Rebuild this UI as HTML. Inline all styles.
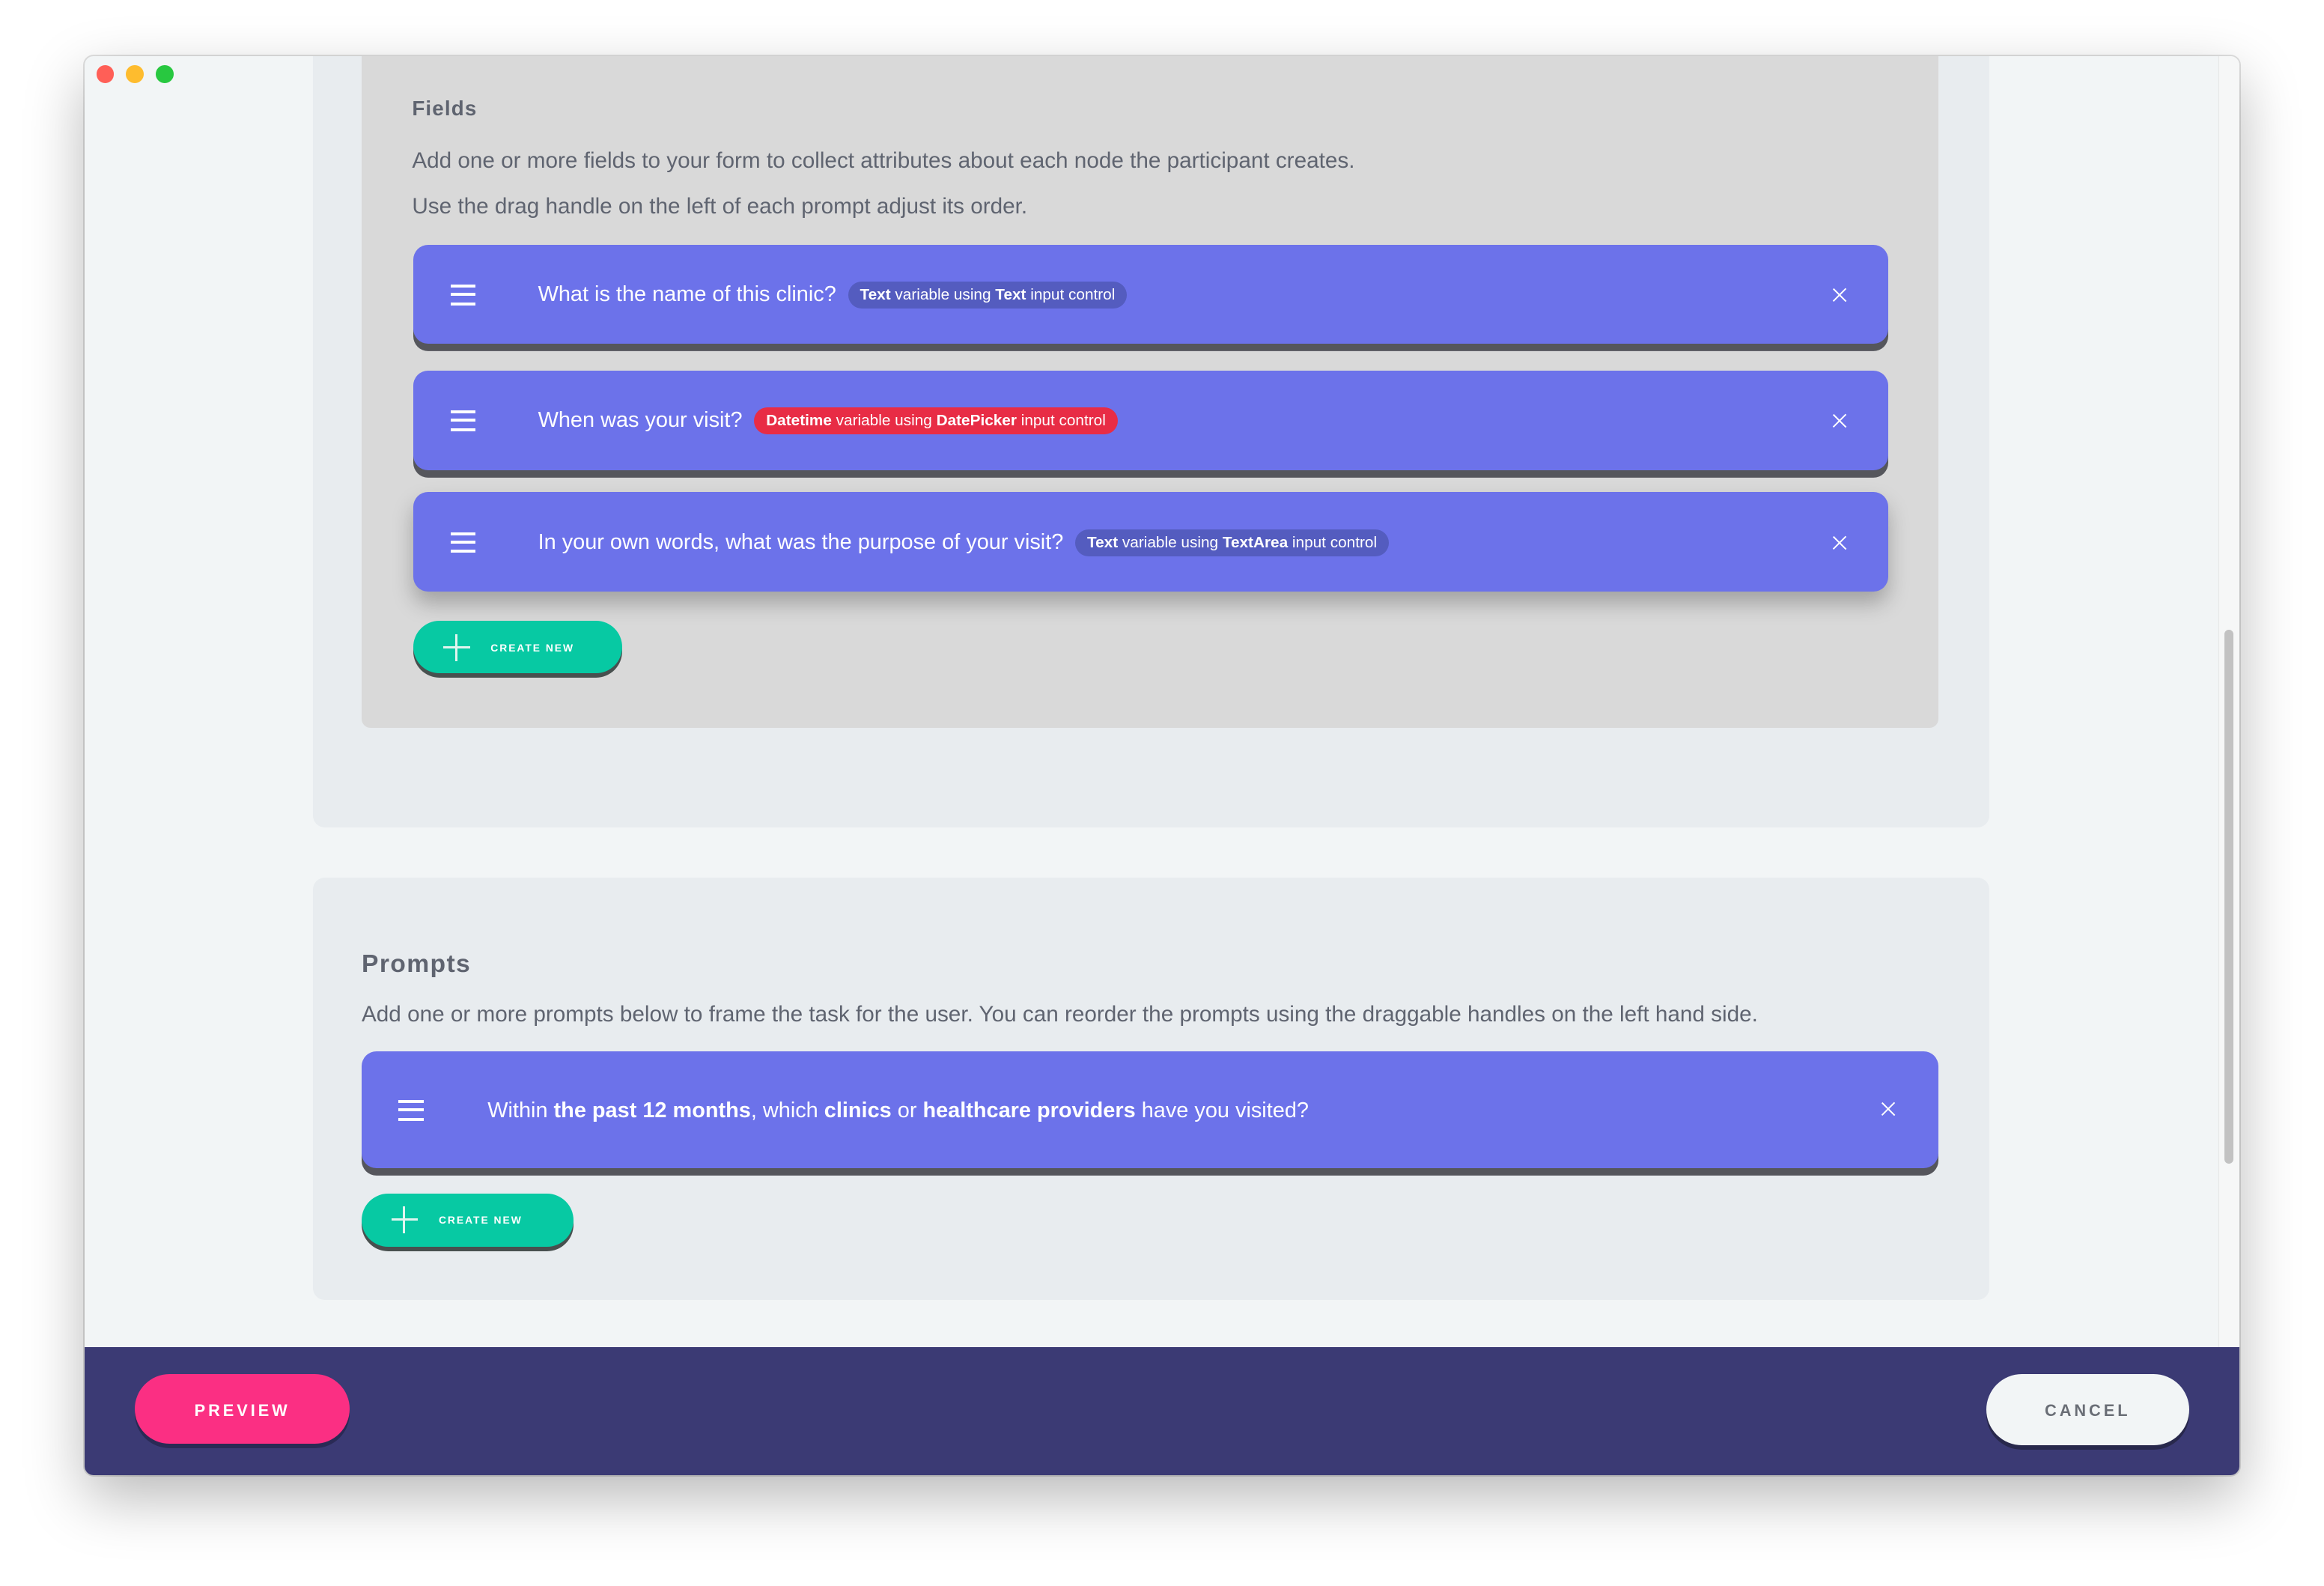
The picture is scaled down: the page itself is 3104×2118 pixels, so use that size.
<!DOCTYPE html>
<html><head><style>
*{box-sizing:border-box;margin:0;padding:0}
html,body{width:3104px;height:2118px;overflow:hidden;background:#fff}
#z{zoom:1.97959;width:1568px;height:1070px;position:relative;font-family:"Liberation Sans",sans-serif}
.win{position:absolute;left:57px;top:38px;width:1454px;height:957px;background:#f2f5f6;border-radius:6px;overflow:hidden;box-shadow:0 15px 40px rgba(0,0,0,.28),0 0 0 1px rgba(0,0,0,.12)}
.dot{position:absolute;top:6px;width:12px;height:12px;border-radius:50%}
.panel{position:absolute;background:#e8ecef;border-radius:8px}
.gray{position:absolute;left:187px;top:-10px;width:1064px;height:463px;background:#d9d9d9;border-radius:6px}
.t{position:absolute;color:#5f6470;font-size:15px}
.card{position:absolute;background:#6c72ea;border-radius:10px;box-shadow:0 5px 0 #55565c;color:#fff;font-size:14.6px}
.ham{position:absolute;width:17px;height:14px;border-top:2.5px solid #fff;border-bottom:2.5px solid #fff}
.ham:after{content:"";position:absolute;left:0;right:0;top:3.5px;border-top:2.5px solid #fff}
.x{position:absolute;width:10px;height:10px}
.x:before,.x:after{content:"";position:absolute;left:4.5px;top:-1px;width:1.2px;height:12px;background:#fff;transform:rotate(45deg)}
.x:after{transform:rotate(-45deg)}
.tag{display:inline-block;border-radius:10px;font-size:10.5px;padding:3px 8px;margin-left:8px;vertical-align:1px}
.btn{position:absolute;background:#07c9a3;border-radius:20px;box-shadow:0 3px 0 #48504f;color:#fff;font-size:7px;font-weight:bold;letter-spacing:1px}
.plus{position:absolute;left:20px;top:9px;width:18px;height:18px}
.plus:before{content:"";position:absolute;left:8px;top:0;width:1.5px;height:18px;background:#e0f5ef}
.plus:after{content:"";position:absolute;top:8px;left:0;height:1.5px;width:18px;background:#e0f5ef}
</style></head><body><div id="z">
<div class="win">
 <div class="panel" style="left:154px;top:-20px;width:1131px;height:540px"></div>
 <div class="gray" style="left:187px"></div>
 <div class="t" style="left:221px;top:27px;font-weight:bold;font-size:14px;letter-spacing:.6px">Fields</div>
 <div class="t" style="left:221px;top:62px">Add one or more fields to your form to collect attributes about each node the participant creates.</div>
 <div class="t" style="left:221px;top:93px">Use the drag handle on the left of each prompt adjust its order.</div>

 <div class="card" style="left:222px;top:127px;width:995px;height:67px"><div class="ham" style="left:25px;top:27px"></div><div style="position:absolute;left:84px;top:25px">What is the name of this clinic?<span class="tag" style="background:#545cbf"><b>Text</b> variable using <b>Text</b> input control</span></div><div class="x" style="left:957px;top:29px"></div></div>
 <div class="card" style="left:222px;top:212px;width:995px;height:67px"><div class="ham" style="left:25px;top:27px"></div><div style="position:absolute;left:84px;top:25px">When was your visit?<span class="tag" style="background:#e82c45"><b>Datetime</b> variable using <b>DatePicker</b> input control</span></div><div class="x" style="left:957px;top:29px"></div></div>
 <div class="card" style="left:222px;top:294px;width:995px;height:67px;box-shadow:0 8px 14px rgba(0,0,0,.25)"><div class="ham" style="left:25px;top:27px"></div><div style="position:absolute;left:84px;top:25px">In your own words, what was the purpose of your visit?<span class="tag" style="background:#545cbf"><b>Text</b> variable using <b>TextArea</b> input control</span></div><div class="x" style="left:957px;top:29px"></div></div>
 <div class="btn" style="left:222px;top:381px;width:141px;height:35px"><div class="plus"></div><div style="position:absolute;left:52px;top:14px">CREATE NEW</div></div>

 <div class="panel" style="left:154px;top:554px;width:1131px;height:285px"></div>
 <div class="t" style="left:187px;top:603px;font-weight:bold;font-size:17px;letter-spacing:.7px">Prompts</div>
 <div class="t" style="left:187px;top:638px">Add one or more prompts below to frame the task for the user. You can reorder the prompts using the draggable handles on the left hand side.</div>
 <div class="card" style="left:187px;top:671px;width:1064px;height:79px"><div class="ham" style="left:25px;top:33px"></div><div style="position:absolute;left:85px;top:32px">Within <b>the past 12 months</b>, which <b>clinics</b> or <b>healthcare providers</b> have you visited?</div><div class="x" style="left:1025px;top:34px"></div></div>
 <div class="btn" style="left:187px;top:767px;width:143px;height:36px"><div class="plus"></div><div style="position:absolute;left:52px;top:14px">CREATE NEW</div></div>

 <div style="position:absolute;left:1440px;top:0;width:14px;height:871px;background:#f6f7f7;border-left:1px solid #e6e6e6"></div>
 <div style="position:absolute;left:1444px;top:387px;width:6px;height:360px;background:#c2c2c2;border-radius:3px"></div>

 <div style="position:absolute;left:0;top:871px;width:1454px;height:86px;background:#3b3a74"></div>
 <div style="position:absolute;left:34px;top:889px;width:145px;height:47px;background:#fb2f83;border-radius:24px;box-shadow:0 3px 0 #2a2a55;color:#fff;font-size:11px;font-weight:bold;letter-spacing:2px;text-align:center;line-height:49px">PREVIEW</div>
 <div style="position:absolute;left:1283px;top:889px;width:137px;height:48px;background:#f2f5f6;border-radius:24px;box-shadow:0 3px 0 #28284c;color:#6a6e76;font-size:11px;font-weight:bold;letter-spacing:2px;text-align:center;line-height:50px">CANCEL</div>

 <div class="dot" style="left:8px;background:#ff5f57"></div>
 <div class="dot" style="left:28px;background:#febc2e"></div>
 <div class="dot" style="left:48px;background:#28c840"></div>
</div>
</div></body></html>
